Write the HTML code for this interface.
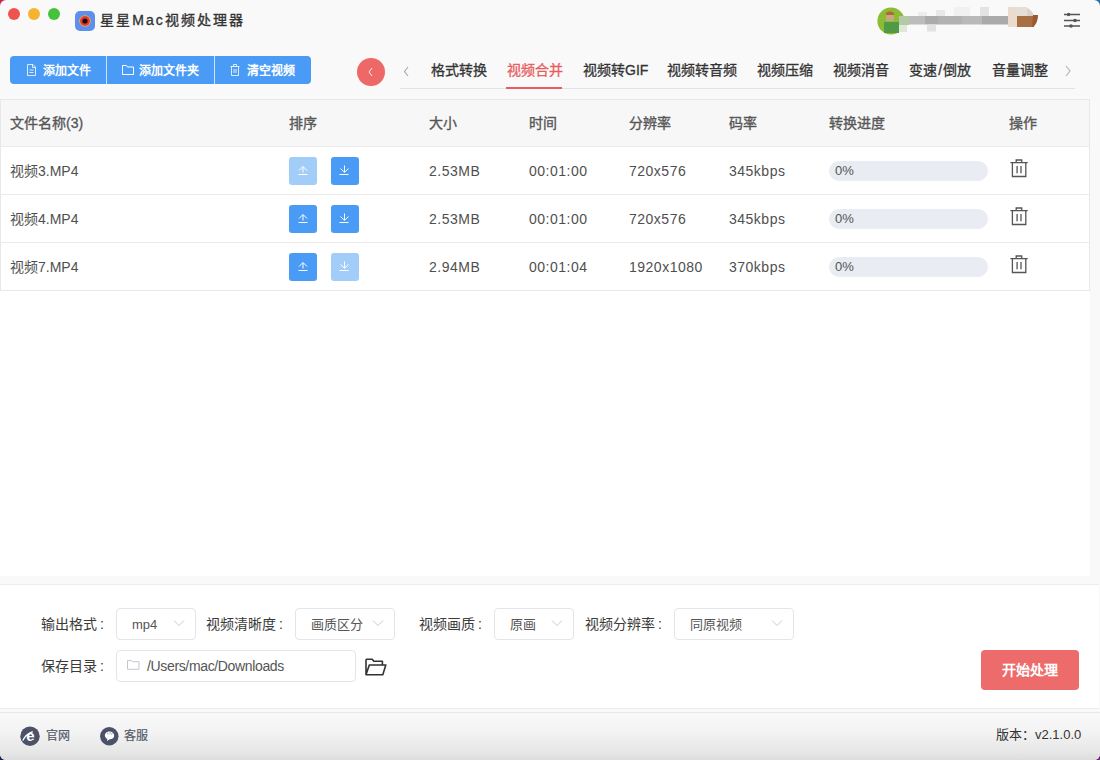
<!DOCTYPE html>
<html lang="zh-CN"><head><meta charset="utf-8">
<style>
*{margin:0;padding:0;box-sizing:border-box}
html,body{width:1100px;height:760px;overflow:hidden;background:#f9f9f9}
.cn{position:absolute;width:8px;height:8px}
body{font-family:"Liberation Sans",sans-serif;position:relative;color:#555}
.abs{position:absolute}
#win{position:absolute;left:0;top:0;width:1100px;height:760px;background:#f9f9f9;border-radius:6px;overflow:hidden}
.corner{position:absolute;width:24px;height:24px}
.tl{left:0;top:0;width:1100px;height:760px}
.dot{position:absolute;top:8px;width:12px;height:12px;border-radius:50%}
#title{left:100px;top:10px;font-size:14px;font-weight:normal;-webkit-text-stroke:0.35px #333;letter-spacing:2.1px;color:#333;line-height:20px}
#btngrp{left:10px;top:56px;width:301px;height:28px;background:#4a9bf5;border-radius:4px;color:#fff;font-size:12px;font-weight:bold}
#btngrp .seg{position:absolute;top:1px;height:28px;line-height:28px}
#btngrp .div{position:absolute;top:0;width:1px;height:28px;background:#cfe3fb}
.tab{position:absolute;top:61px;font-size:14px;font-weight:normal;-webkit-text-stroke:0.3px currentColor;color:#333;line-height:18px;white-space:nowrap}
#tabline{left:400px;top:88px;width:675px;height:1px;background:#dfe3ea}
#main{left:0;top:99px;width:1090px;height:477px;background:#fff}
#tbl{left:0;top:99px;width:1090px;height:192px;border:1px solid #e8e8e8}
.th{position:absolute;top:114px;font-size:14px;font-weight:normal;-webkit-text-stroke:0.35px currentColor;color:#575757;line-height:18px;white-space:nowrap}
.td{position:absolute;font-size:14px;color:#4f4f4f;letter-spacing:0.5px;line-height:18px;white-space:nowrap}
.hline{position:absolute;left:0;width:1090px;height:1px;background:#ebebeb}
.sb{position:absolute;width:28px;height:28px;border-radius:3px;background:#4a9bf5}
.sb.dis{background:#a3cdf9}
.prog{position:absolute;left:829px;width:159px;height:20px;border-radius:10px;background:#e9ecf3}
.prog span{position:absolute;left:6px;top:2px;font-size:13px;line-height:16px;color:#555}
.trash{position:absolute;left:1010px;width:18px;height:19px}
#panel{left:0;top:584px;width:1099px;height:125px;background:#fff;border-top:1px solid #ececec;border-bottom:1px solid #ececec}
.lbl{position:absolute;font-size:14px;color:#3a3a3a;line-height:18px;white-space:nowrap}
.sel{position:absolute;top:608px;height:32px;border:1px solid #e3e5e9;border-radius:4px;background:#fff;font-size:13px;color:#555}
.sel span{position:absolute;top:7px;line-height:17px;white-space:nowrap}
.sel svg{position:absolute;top:10px}
#footer{left:0;top:712px;width:1100px;height:48px;border-top:1px solid #e8e8e8;background:linear-gradient(#f9f9f9 0%,#f4f4f4 35%,#e6e6e6 85%,#dcdcdc 100%)}
</style></head><body>
<div class="cn" style="left:0;top:0;background:#c8245a"></div><div class="cn" style="right:0;top:0;background:#1d6fb0"></div><div class="cn" style="left:0;bottom:0;background:#1d2350"></div><div class="cn" style="right:0;bottom:0;background:#6a2a7a"></div>
<div id="win">
  <!-- traffic lights -->
  <div class="dot" style="left:8px;background:#ee544e"></div>
  <div class="dot" style="left:28px;background:#f4b42f"></div>
  <div class="dot" style="left:48px;background:#44c23b"></div>
  <!-- app icon -->
  <svg class="abs" style="left:75px;top:11px" width="20" height="20" viewBox="0 0 20 20"><rect x="0" y="0" width="20" height="20" rx="5" fill="#5d90ee"/><circle cx="10" cy="10" r="5.8" fill="#f2b431"/><circle cx="10" cy="10" r="5" fill="#e8393a"/><circle cx="10" cy="10" r="2.6" fill="#111"/></svg>
  <div id="title" class="abs">星星Mac视频处理器</div>
  <!-- avatar + blurred name -->
  <svg class="abs" style="left:870px;top:0;filter:blur(0.6px)" width="175" height="40" viewBox="0 0 175 40">
    <circle cx="21" cy="21" r="13.6" fill="#8cbb35"/>
    <path d="M16 13c2-2 6-2 8 0v4h-8z" fill="#b0683a"/>
    <rect x="16" y="15" width="8" height="6" fill="#c9a77e"/>
    <rect x="14" y="22" width="15" height="11" fill="#4f9a45"/>
    <rect x="29" y="16" width="10" height="9" fill="#b4c9a4"/>
    <rect x="29" y="25" width="8" height="7" fill="#dfe8d8"/>
    <rect x="39" y="16" width="16" height="8.5" fill="#bcbcbc"/>
    <rect x="48" y="12" width="9" height="4" fill="#ececec"/>
    <rect x="55" y="16" width="13" height="8.5" fill="#ababab"/>
    <rect x="57" y="24.5" width="9" height="7" fill="#e2e2e2"/>
    <rect x="66" y="10" width="9" height="6" fill="#e8e8e8"/>
    <rect x="68" y="16" width="24" height="8.5" fill="#b2b2b2"/>
    <rect x="84" y="7" width="16" height="9" fill="#f1f1f1"/>
    <rect x="92" y="16" width="20" height="8.5" fill="#b9b9b9"/>
    <rect x="110" y="7" width="9" height="9" fill="#e3e3e3"/>
    <rect x="112" y="16" width="26" height="8.5" fill="#aaaaaa"/>
    <rect x="138" y="7" width="9" height="20" fill="#eadbcf"/>
    <rect x="147" y="7" width="10" height="9" fill="#e6ddd6"/>
    <rect x="147" y="16" width="17" height="11" fill="#a86f45"/>
    <path d="M157 8c3 1 6 4 7 8h-7z" fill="#ddd2ca"/>
    <path d="M163 15h5c0 5-2 11-6 12z" fill="#9a5a2e"/>
  </svg>
  <!-- settings icon -->
  <svg class="abs" style="left:1062px;top:10px" width="20" height="20" viewBox="0 0 20 20">
    <g stroke="#555" stroke-width="1.6" fill="#555">
      <line x1="2" y1="4.5" x2="18" y2="4.5"/><circle cx="6.6" cy="4.5" r="1.8" stroke="none"/>
      <line x1="2" y1="10.5" x2="18" y2="10.5"/><circle cx="13" cy="10.5" r="1.8" stroke="none"/>
      <line x1="2" y1="16" x2="18" y2="16"/><circle cx="9" cy="16" r="1.8" stroke="none"/>
    </g>
  </svg>

  <!-- button group -->
  <div id="btngrp" class="abs">
    <div class="div" style="left:96px"></div>
    <div class="div" style="left:204px"></div>
    <svg class="abs" style="left:16px;top:8px" width="11" height="12" viewBox="0 0 11 12"><g fill="none" stroke="#fff" stroke-width="0.9" opacity="0.9"><path d="M1.5 .5h5.5l2.5 2.5v8.5h-8z"/><path d="M6.5 .5v3h3M3.5 6h4M3.5 8.5h4"/></g></svg>
    <div class="seg" style="left:33px">添加文件</div>
    <svg class="abs" style="left:112px;top:9px" width="12" height="10" viewBox="0 0 12 10"><path d="M.5 .5h4l1 1.5h6v7.5h-11z" fill="none" stroke="#fff" stroke-width="1"/></svg>
    <div class="seg" style="left:129px">添加文件夹</div>
    <svg class="abs" style="left:220px;top:8px" width="10" height="12" viewBox="0 0 10 12"><g fill="none" stroke="#fff" stroke-width="0.9" opacity="0.9"><path d="M.5 2.5h9M3.5 2.5v-2h3v2M1.5 2.5v9h7v-9M4 5v4M6 5v4"/></g></svg>
    <div class="seg" style="left:237px">清空视频</div>
  </div>

  <!-- back circle -->
  <div class="abs" style="left:357px;top:58px;width:28px;height:28px;border-radius:50%;background:#ee6868"></div>
  <svg class="abs" style="left:367px;top:67px" width="8" height="10" viewBox="0 0 8 10"><path d="M5 1L2 5l3 4" fill="none" stroke="#fff" stroke-width="0.9"/></svg>

  <!-- tabs -->
  <svg class="abs" style="left:401px;top:64px" width="10" height="14" viewBox="0 0 10 14"><path d="M7 3L3.5 7.5 7 12" fill="none" stroke="#a8a8a8" stroke-width="1.1"/></svg>
  <div class="tab" style="left:431px">格式转换</div>
  <div class="tab" style="left:507px;color:#e85d5d">视频合并</div>
  <div class="tab" style="left:583px">视频转GIF</div>
  <div class="tab" style="left:667px">视频转音频</div>
  <div class="tab" style="left:757px">视频压缩</div>
  <div class="tab" style="left:833px">视频消音</div>
  <div class="tab" style="left:909px">变速<span style="margin:0 1.2px">/</span>倒放</div>
  <div class="tab" style="left:992px">音量调整</div>
  <svg class="abs" style="left:1063px;top:64px" width="10" height="14" viewBox="0 0 10 14"><path d="M3 2l4 5-4 5" fill="none" stroke="#b5b5b5" stroke-width="1.2"/></svg>
  <div id="tabline" class="abs"></div>
  <div class="abs" style="left:506px;top:87px;width:56px;height:2px;background:#e85d5d"></div>

  <!-- main white area -->
  <div id="main" class="abs"></div>
  <div class="abs" style="left:1090px;top:99px;width:10px;height:485px;background:#f9f9f9"></div>
  <!-- table -->
  <div id="tbl" class="abs"></div>
  <div class="abs" style="left:1px;top:100px;width:1088px;height:46px;background:#f7f7f7"></div>
  <div class="hline" style="top:146px"></div>
  <div class="hline" style="top:194px"></div>
  <div class="hline" style="top:242px"></div>
  <div class="th" style="left:10px">文件名称(3)</div>
  <div class="th" style="left:289px">排序</div>
  <div class="th" style="left:429px">大小</div>
  <div class="th" style="left:529px">时间</div>
  <div class="th" style="left:629px">分辨率</div>
  <div class="th" style="left:729px">码率</div>
  <div class="th" style="left:829px">转换进度</div>
  <div class="th" style="left:1009px">操作</div>

  <!-- rows -->
  <div class="td" style="letter-spacing:0;left:10px;top:162px">视频3.MP4</div>
  <div class="sb dis" style="left:289px;top:157px"><svg width="28" height="28" viewBox="0 0 28 28"><path d="M10 13.5l4-4 4 4M14 9.8v5.7M9.5 17.5h9" fill="none" stroke="#fff" stroke-width="1"/></svg></div>
  <div class="sb" style="left:331px;top:157px"><svg width="28" height="28" viewBox="0 0 28 28"><path d="M9.5 11.5l4 3.8 4-3.8M13.5 8.5v6.5M8.5 17.5h9" fill="none" stroke="#fff" stroke-width="1"/></svg></div>
  <div class="td" style="left:429px;top:162px">2.53MB</div>
  <div class="td" style="left:529px;top:162px">00:01:00</div>
  <div class="td" style="left:629px;top:162px">720x576</div>
  <div class="td" style="left:729px;top:162px">345kbps</div>
  <div class="prog" style="top:161px"><span>0%</span></div>
  <svg class="abs" style="left:1010px;top:158px" width="18" height="20" viewBox="0 0 18 20"><path d="M.4 4.6h17.3M6.2 4.6V2h5.5v2.6M2.4 4.6v13.9h13.4V4.6M7.1 8v7.2M11 8v7.2" fill="none" stroke="#555" stroke-width="1.3"/></svg>

  <div class="td" style="letter-spacing:0;left:10px;top:210px">视频4.MP4</div>
  <div class="sb" style="left:289px;top:205px"><svg width="28" height="28" viewBox="0 0 28 28"><path d="M10 13.5l4-4 4 4M14 9.8v5.7M9.5 17.5h9" fill="none" stroke="#fff" stroke-width="1"/></svg></div>
  <div class="sb" style="left:331px;top:205px"><svg width="28" height="28" viewBox="0 0 28 28"><path d="M9.5 11.5l4 3.8 4-3.8M13.5 8.5v6.5M8.5 17.5h9" fill="none" stroke="#fff" stroke-width="1"/></svg></div>
  <div class="td" style="left:429px;top:210px">2.53MB</div>
  <div class="td" style="left:529px;top:210px">00:01:00</div>
  <div class="td" style="left:629px;top:210px">720x576</div>
  <div class="td" style="left:729px;top:210px">345kbps</div>
  <div class="prog" style="top:209px"><span>0%</span></div>
  <svg class="abs" style="left:1010px;top:206px" width="18" height="20" viewBox="0 0 18 20"><path d="M.4 4.6h17.3M6.2 4.6V2h5.5v2.6M2.4 4.6v13.9h13.4V4.6M7.1 8v7.2M11 8v7.2" fill="none" stroke="#555" stroke-width="1.3"/></svg>

  <div class="td" style="letter-spacing:0;left:10px;top:258px">视频7.MP4</div>
  <div class="sb" style="left:289px;top:253px"><svg width="28" height="28" viewBox="0 0 28 28"><path d="M10 13.5l4-4 4 4M14 9.8v5.7M9.5 17.5h9" fill="none" stroke="#fff" stroke-width="1"/></svg></div>
  <div class="sb dis" style="left:331px;top:253px"><svg width="28" height="28" viewBox="0 0 28 28"><path d="M9.5 11.5l4 3.8 4-3.8M13.5 8.5v6.5M8.5 17.5h9" fill="none" stroke="#fff" stroke-width="1"/></svg></div>
  <div class="td" style="left:429px;top:258px">2.94MB</div>
  <div class="td" style="left:529px;top:258px">00:01:04</div>
  <div class="td" style="left:629px;top:258px">1920x1080</div>
  <div class="td" style="left:729px;top:258px">370kbps</div>
  <div class="prog" style="top:257px"><span>0%</span></div>
  <svg class="abs" style="left:1010px;top:254px" width="18" height="20" viewBox="0 0 18 20"><path d="M.4 4.6h17.3M6.2 4.6V2h5.5v2.6M2.4 4.6v13.9h13.4V4.6M7.1 8v7.2M11 8v7.2" fill="none" stroke="#555" stroke-width="1.3"/></svg>

  <!-- bottom panel -->
  <div id="panel" class="abs"></div>
  <div class="lbl" style="left:41px;top:615px">输出格式<span style="margin-left:3px">:</span></div>
  <div class="sel" style="left:116px;width:80px"><span style="left:15px">mp4</span><svg style="left:56px" width="12" height="8" viewBox="0 0 12 8"><path d="M1 1.5l5 5 5-5" fill="none" stroke="#c8cbd2" stroke-width="1"/></svg></div>
  <div class="lbl" style="left:206px;top:615px">视频清晰度<span style="margin-left:3px">:</span></div>
  <div class="sel" style="left:295px;width:100px"><span style="left:15px">画质区分</span><svg style="left:76px" width="12" height="8" viewBox="0 0 12 8"><path d="M1 1.5l5 5 5-5" fill="none" stroke="#c8cbd2" stroke-width="1"/></svg></div>
  <div class="lbl" style="left:419px;top:615px">视频画质<span style="margin-left:3px">:</span></div>
  <div class="sel" style="left:494px;width:80px"><span style="left:15px">原画</span><svg style="left:56px" width="12" height="8" viewBox="0 0 12 8"><path d="M1 1.5l5 5 5-5" fill="none" stroke="#c8cbd2" stroke-width="1"/></svg></div>
  <div class="lbl" style="left:585px;top:615px">视频分辨率<span style="margin-left:3px">:</span></div>
  <div class="sel" style="left:674px;width:120px"><span style="left:15px">同原视频</span><svg style="left:96px" width="12" height="8" viewBox="0 0 12 8"><path d="M1 1.5l5 5 5-5" fill="none" stroke="#c8cbd2" stroke-width="1"/></svg></div>

  <div class="lbl" style="left:41px;top:657px">保存目录<span style="margin-left:3px">:</span></div>
  <div class="sel" style="left:116px;top:650px;width:240px;height:32px"><span style="left:30px;top:7px;font-size:14px;letter-spacing:-0.35px">/Users/mac/Downloads</span><svg style="left:10px;top:9px" width="13" height="11" viewBox="0 0 13 11"><path d="M.5 .5h4l1 1.2h6.5v7.6H.5z" fill="none" stroke="#c4c7ce" stroke-width="1"/></svg></div>
  <svg class="abs" style="left:364px;top:656px" width="23" height="21" viewBox="0 0 23 21"><path d="M2 3.2h6.2l1.6 2h8.6v3M2 3.2v15.6h16.8l3-9.8H5.3L2 18.8" fill="none" stroke="#333" stroke-width="1.6" stroke-linejoin="round"/></svg>
  <div class="abs" style="left:981px;top:650px;width:98px;height:40px;border-radius:4px;background:#ee6b6b;color:#fff;font-size:14px;font-weight:bold;line-height:40px;text-align:center">开始处理</div>

  <!-- footer -->
  <div id="footer" class="abs"></div>
  <svg class="abs" style="left:20px;top:726px" width="20" height="20" viewBox="0 0 20 20"><circle cx="10" cy="10.2" r="9.7" fill="#4a5169"/><text x="10.3" y="15" text-anchor="middle" font-family="Liberation Sans" font-weight="bold" font-size="15" fill="#fff">e</text><path d="M2.8 14.5c1.5-3 5-7 10-8.8" stroke="#fff" stroke-width="1.4" fill="none"/><path d="M5 15.5c2 .8 5 .8 8-1" stroke="#4a5169" stroke-width="1" fill="none"/></svg>
  <div class="abs" style="left:46px;top:728px;font-size:12px;color:#545a6a;-webkit-text-stroke:0.2px #545a6a;line-height:16px">官网</div>
  <svg class="abs" style="left:100px;top:727px" width="19" height="19" viewBox="0 0 19 19"><circle cx="9.3" cy="9.3" r="9.2" fill="#4a5169"/><path d="M5 9.2c-.6-2.6 1.3-4.8 4.5-4.8s5 2.3 4.6 4.8c-.3 1.8-2 3-4.3 3.1l-3 1.7.6-2.2C6.2 11.4 5.2 10.4 5 9.2z" fill="#fff"/><path d="M7.2 5.5l1 2M10.2 4.8l-.2 2.4M12.6 5.6l-1.2 2" stroke="#4a5169" stroke-width=".5"/></svg>
  <div class="abs" style="left:124px;top:728px;font-size:12px;color:#545a6a;-webkit-text-stroke:0.2px #545a6a;line-height:16px">客服</div>
  <div class="abs" style="left:996px;top:727px;font-size:13px;color:#333;line-height:16px">版本：v2.1.0.0</div>
</div>
</body></html>
